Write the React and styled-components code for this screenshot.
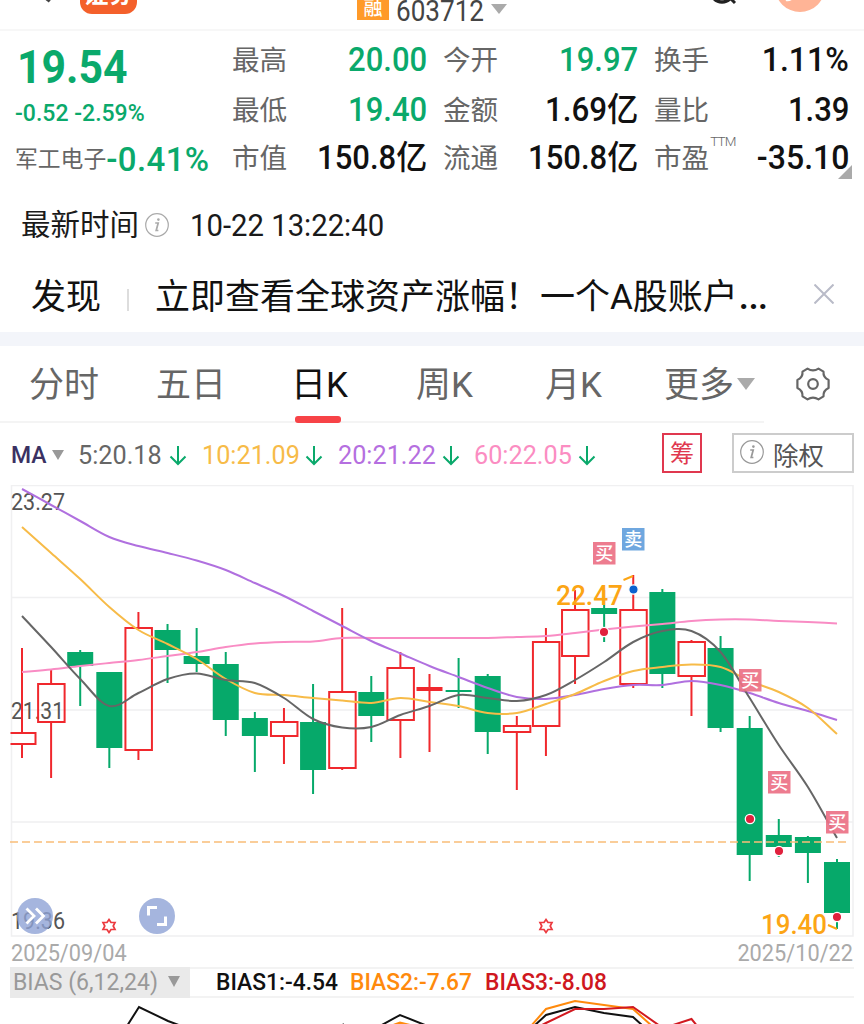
import React from "react";
import styled, { createGlobalStyle } from "styled-components";

const GlobalStyle = createGlobalStyle`
  * {
    box-sizing: border-box;
  }
  body {
    margin: 0;
    background: #fff;
    font-family: Roboto, "Noto Sans CJK SC", sans-serif;
  }
`;

const Page = styled.div`
  width: 864px;
  height: 1024px;
  overflow: hidden;
  background: #fff;
`;

// narrow figures, squeezed towards the side they are aligned to
const Num = styled.span`
  display: inline-block;
  transform: scaleX(${(p) => p.$s || 0.94});
  transform-origin: ${(p) => (p.$right ? "right" : "left")} center;
`;

const Header = styled.header`
  position: relative;
  height: 31px;
  overflow: hidden;
  border-bottom: 2px solid #f7f7f7;
  display: flex;
  justify-content: center;
`;

const HeaderArt = styled.svg`
  position: absolute;
  left: 0;
  top: 0;
`;

const Broker = styled.div`
  position: absolute;
  left: 80px;
  top: -26px;
  width: 57px;
  height: 40px;
  border-radius: 12px;
  background: #f4602b;
  color: #fff;
  font-size: 25px;
  font-weight: 700;
  line-height: 42px;
  text-align: center;
`;

const Code = styled.div`
  display: flex;
  align-items: flex-start;
  height: 29px;
  margin-top: -6px;
  font-size: 29px;
  line-height: 34px;
  color: #444;
  ${Num} {
    margin-right: -10px;
  }
`;

const Margin = styled.span`
  width: 32px;
  height: 26px;
  margin: 0 7px 0 0;
  background: #ff9a29;
  color: #fff;
  font-size: 19px;
  font-weight: 500;
  line-height: 29px;
  text-align: center;
`;

const Caret = styled.i`
  display: inline-block;
  flex: none;
  border-style: solid;
  border-color: ${(p) => p.color || "#aaa"} transparent transparent;
  border-width: ${(p) => p.h}px ${(p) => p.w / 2}px 0;
  margin: ${(p) => p.m || "0"};
`;

const Quote = styled.section`
  position: relative;
  display: grid;
  grid-template-columns: 217px 195px 16px 195px 16px 195px;
  grid-template-rows: 50px 50px 46px;
  height: 161px;
  padding: 4px 15px 0;
`;

const Summary = styled.div`
  grid-row: 1 / 4;
  height: 146px;
`;

const Price = styled.div`
  height: 58px;
  padding-left: 2px;
  font-size: 46px;
  font-weight: 700;
  line-height: 65px;
  color: #0aa96b;
`;

const Change = styled.div`
  height: 30px;
  font-size: 23.5px;
  font-weight: 500;
  line-height: 40px;
  color: #0aa96b;
`;

const Sector = styled.div`
  display: flex;
  align-items: center;
  height: 74px;
  font-size: 22.8px;
  line-height: 36px;
  color: #666;
  white-space: nowrap;
  b {
    font-size: 33px;
    font-weight: 500;
    letter-spacing: 0.4px;
    color: #0aa96b;
  }
`;

const Cell = styled.div`
  grid-column: ${(p) => p.$col};
  display: flex;
  align-items: center;
  justify-content: space-between;
  font-size: 27.6px;
  line-height: 36px;
  color: #666;
  white-space: nowrap;
  sup {
    font-size: 13.5px;
    font-weight: 300;
    line-height: 15px;
    align-self: flex-start;
    margin: -1px auto 0 1px;
    width: 20px;
    letter-spacing: -0.8px;
  }
`;

const Label = styled.span`
  padding-top: 2px;
`;

const Value = styled(Num)`
  font-size: 33px;
  font-weight: 500;
  color: ${(p) => (p.$green ? "#0aa96b" : "#111")};
`;

const Corner = styled.i`
  position: absolute;
  right: 12px;
  top: 134px;
  border-style: solid;
  border-width: 0 0 14px 14px;
  border-color: transparent transparent #aaa;
`;

const TimeRow = styled.div`
  display: flex;
  align-items: center;
  height: 66px;
  padding: 0 21px;
  font-size: 29.5px;
  line-height: 40px;
  color: #1a1a1a;
  svg {
    margin: -1px 21px 0 6px;
  }
  ${Num} {
    padding-top: 2px;
    font-size: 30.5px;
  }
`;

const Discover = styled.div`
  display: flex;
  align-items: center;
  height: 74px;
  padding: 6px 30px 0 31px;
  font-size: 35px;
  line-height: 68px;
  color: #111;
  white-space: nowrap;
  svg {
    margin-top: -9px;
  }
`;

const Divider = styled.i`
  width: 2px;
  height: 22px;
  margin: 4px 26px 0 26px;
  background: #ddd;
`;

const Promo = styled.span`
  flex: 1;
  b {
    font-size: 46px;
    font-weight: 400;
    line-height: 40px;
  }
`;

const Band = styled.div`
  height: 14px;
  background: #f3f5fa;
`;

const Tabs = styled.nav`
  display: flex;
  height: 77px;
  padding-left: 29px;
  font-size: 35px;
  color: #666;
  background: linear-gradient(#f4f4f4, #f4f4f4) 0 100% / 764px 2px no-repeat;
`;

const Tab = styled.div`
  display: flex;
  align-items: center;
  position: relative;
  width: ${(p) => p.$w}px;
  padding-bottom: ${(p) => (p.$icon ? 1 : 6)}px;
  color: ${(p) => (p.$active ? "#111" : "#666")};
  &::after {
    content: "";
    display: ${(p) => (p.$active ? "block" : "none")};
    position: absolute;
    left: 4px;
    bottom: 0;
    width: 46px;
    height: 7px;
    border-radius: 3px;
    background: #f74347;
  }
`;

const MaRow = styled.div`
  display: flex;
  align-items: center;
  height: 62px;
  padding: 2px 10px 0 11px;
  font-size: 26px;
  white-space: nowrap;
`;

const MaName = styled.span`
  width: 67px;
  font-size: 23px;
  font-weight: 500;
  color: #3a3162;
`;

const MaItem = styled.span`
  display: flex;
  align-items: center;
  justify-content: space-between;
  width: ${(p) => p.$w}px;
  margin-right: 14.6px;
  color: ${(p) => p.color};
`;

const Chips = styled.span`
  width: 40px;
  height: 40px;
  margin: -4px 30px 0 auto;
  border: 2px solid #e0384f;
  color: #e0384f;
  font-size: 24px;
  line-height: 38px;
  text-align: center;
`;

const ExRights = styled.span`
  display: flex;
  align-items: center;
  width: 122px;
  height: 40px;
  margin-top: -4px;
  padding-left: 6px;
  border: 2px solid #ccc;
  color: #555;
  font-size: 25.5px;
  svg {
    margin: -2px 9px 0 0;
  }
`;

const Chart = styled.svg`
  display: block;
`;

const Dates = styled.div`
  display: flex;
  justify-content: space-between;
  height: 29px;
  padding: 0 11px;
  font-size: 23.5px;
  line-height: 30px;
  color: #aaa;
`;

const BiasRow = styled.div`
  display: flex;
  align-items: center;
  height: 31px;
  margin: 0 10px;
  border-top: 2px solid #f3f3f3;
  border-bottom: 2px solid #f3f3f3;
  font-size: 23.5px;
  line-height: 26px;
  white-space: nowrap;
`;

const BiasName = styled.span`
  display: flex;
  align-items: center;
  justify-content: space-between;
  width: 180px;
  height: 31px;
  margin-right: 26px;
  padding: 0 10px 2px 3px;
  background: #eaeaea;
  color: #999;
`;

const BiasValue = styled.span`
  width: ${(p) => p.$w}px;
  padding-bottom: 2px;
  color: ${(p) => p.color};
  font-weight: 500;
`;

const Info = ({ size, color }) => (
  <svg width={size} height={size} viewBox="0 0 24 24">
    <circle cx="12" cy="12" r="11.3" fill="none" stroke={color} strokeWidth="1.2" />
    <path d="M10.2 10h3l-2 7.5h2.2" fill="none" stroke={color} strokeWidth="1.7" />
    <circle cx="13.4" cy="6.6" r="1.3" fill={color} />
  </svg>
);

const Down = () => (
  <svg width="18" height="21" viewBox="0 0 18 21">
    <path d="M9 1v18M1.5 11.5L9 19l7.5-7.5" fill="none" stroke="#0aa96b" strokeWidth="2" />
  </svg>
);

const Gear = () => (
  <svg width="34" height="34" viewBox="0 0 34 34" fill="none" stroke="#666" strokeWidth="2.2">
    <path
      d="M11.500 1.600Q17 5 22.500 1.600L27.500 4.600Q27 10.500 32.600 13V21Q27 23.500 27.500 29.400L22.500 32.400Q17 29 11.500 32.400L6.500 29.400Q7 23.500 1.400 21V13Q7 10.500 6.500 4.600Z"
      strokeLinejoin="round"
    />
    <circle cx="17" cy="17" r="4.800" />
  </svg>
);

// [up, high, low, bodyTop, bodyBottom]
const candles = [
  [1, 648, 758, 732, 745],
  [1, 670, 778, 683, 723],
  [0, 650, 706, 652, 666],
  [0, 672, 768, 672, 748],
  [1, 612, 760, 627, 751],
  [0, 624, 683, 630, 650],
  [0, 628, 672, 656, 664],
  [0, 652, 736, 664, 720],
  [0, 712, 772, 718, 736],
  [1, 708, 764, 721, 737],
  [0, 684, 794, 722, 770],
  [1, 608, 770, 691, 769],
  [0, 676, 742, 692, 716],
  [1, 652, 758, 667, 721],
  [1, 674, 752, 687, 691],
  [0, 658, 708, 690, 692],
  [0, 674, 754, 676, 732],
  [1, 716, 790, 725, 733],
  [1, 628, 756, 641, 727],
  [1, 590, 684, 609, 657],
  [0, 590, 642, 608, 614],
  [1, 575, 688, 609, 685],
  [0, 589, 688, 592, 674],
  [1, 640, 716, 641, 677],
  [0, 636, 732, 648, 728],
  [0, 716, 881, 728, 855],
  [0, 819, 857, 835, 847],
  [0, 836, 883, 837, 853],
  [0, 859, 929, 862, 913],
];

const ma5 = [616, 647, 679, 706, 693, 679, 673.5, 680, 683, 698, 719, 727.5, 727, 715, 706, 695, 698, 701, 695, 680, 662, 642, 631, 631, 652, 698, 745, 787, 838];
const ma10 = [527, 553, 579, 607, 630, 644, 659, 679, 693, 695, 698, 700.5, 703, 698, 702, 706, 713, 713, 704, 694, 681, 671, 667, 664.5, 667, 681, 692, 708, 734];
const ma20 = [489, 505, 521, 537, 546, 553, 560.5, 570, 583, 596, 611, 626, 641, 653.5, 666, 677, 688, 697, 699, 695, 689, 685, 685, 681, 685, 693, 703, 711, 720];
const ma60 = [672, 669.5, 666, 663, 660, 656, 652, 647, 643.5, 642, 641.5, 638, 638, 638, 638, 638, 638, 637, 636, 633, 629.5, 626.5, 624, 621, 619.5, 619.5, 621, 622, 623.5];

const xOf = (i) => 22 + i * 29.107;

function smooth(ys) {
  const last = ys.length - 1;
  // the line is continued past both ends so that it starts and stops straight
  const at = (i) => (i < 0 ? 2 * ys[0] - ys[1] : i > last ? 2 * ys[last] - ys[last - 1] : ys[i]);
  let d = `M${xOf(0)} ${ys[0]}`;
  for (let i = 0; i < last; i++) {
    const c1 = at(i) + (at(i + 1) - at(i - 1)) / 6;
    const c2 = at(i + 1) - (at(i + 2) - at(i)) / 6;
    d += `C${xOf(i) + 9.7} ${c1} ${xOf(i + 1) - 9.7} ${c2} ${xOf(i + 1)} ${ys[i + 1]}`;
  }
  return d;
}

const Candle = ({ i, data }) => {
  const [up, high, low, top, bottom] = data;
  const x = xOf(i);
  const color = up ? "#f0282d" : "#06a96a";
  const hollow = up && bottom - top > 5;
  return (
    <g>
      <path d={`M${x} ${high}V${top}M${x} ${bottom}V${low}`} stroke={color} strokeWidth="2" />
      {hollow ? (
        <rect x={x - 13} y={top + 1} width="26.500" height={bottom - top - 2} fill="none" stroke={color} strokeWidth="2" />
      ) : (
        <rect x={x - 13} y={top} width="26" height={bottom - top} fill={color} />
      )}
    </g>
  );
};

const Mark = ({ x, y, sell }) => (
  <g>
    <rect x={x} y={y} width="22.500" height="22.500" fill={sell ? "#639fdc" : "#ec7186"} opacity="0.92" />
    <text x={x + 11.2} y={y + 17.5} fontSize="18" fontWeight="500" textAnchor="middle" fill="#fff">
      {sell ? "卖" : "买"}
    </text>
  </g>
);

const Star = ({ x }) => (
  <path
    transform={`translate(${x} 926)`}
    d="M0 -6.500L2 -3.500H6L4.200 0L6 3.500H2L0 6.500L-2 3.500H-6L-4.200 0L-6 -3.500H-2Z"
    fill="none"
    stroke="#ec3a3f"
    strokeWidth="1.700"
  />
);

const KLine = () => (
  <Chart width="864" height="453" viewBox="0 485 864 453">
    <defs>
      <clipPath id="plot">
        <rect x="10.500" y="485" width="843" height="453" />
      </clipPath>
    </defs>
    <path d="M11.500 485.500H853V936H11.500ZM11 597.500H853M11 710H853M11 822H853" fill="none" stroke="#f0f0f1" strokeWidth="1.500" />
    <g fontSize="23.500" fill="#555">
      <text x="11" y="510" textLength="54" lengthAdjust="spacingAndGlyphs">23.27</text>
      <text x="11" y="719" textLength="53" lengthAdjust="spacingAndGlyphs">21.31</text>
      <text x="11" y="929" textLength="54" lengthAdjust="spacingAndGlyphs">19.36</text>
    </g>
    <g clipPath="url(#plot)">
      {candles.map((c, i) => (
        <Candle key={i} i={i} data={c} />
      ))}
    </g>
    <path d="M10 842H850" stroke="#f9bd78" strokeWidth="1.500" strokeDasharray="8 4" />
    <g fill="none" strokeWidth="2">
      <path d={smooth(ma60)} stroke="#f98cc4" />
      <path d={smooth(ma20)} stroke="#b070df" />
      <path d={smooth(ma10)} stroke="#f7bb48" />
      <path d={smooth(ma5)} stroke="#666" />
    </g>
    <g fontSize="28" fontWeight="500" fill="#fca515">
      <text x="556" y="605" textLength="67" lengthAdjust="spacingAndGlyphs">22.47</text>
      <text x="761" y="934" textLength="66" lengthAdjust="spacingAndGlyphs">19.40</text>
    </g>
    <path d="M623.500 580L633 576M828 925L837 929" fill="none" stroke="#fca515" strokeWidth="2" />
    <Mark x={593} y={542} />
    <Mark x={622} y={528} sell />
    <Mark x={739} y={669} />
    <Mark x={768} y={771} />
    <Mark x={826} y={811} />
    <g fill="#e0213d" stroke="#fff" strokeWidth="1.300">
      <circle cx="604" cy="632" r="4.700" />
      <circle cx="750" cy="819" r="4.700" />
      <circle cx="779" cy="851" r="4.700" />
      <circle cx="837" cy="917" r="4.700" />
      <circle cx="633.500" cy="589.500" r="4.700" fill="#0a62cf" />
    </g>
    <Star x={109} />
    <Star x={546} />
    <g fill="#8fa3d6" opacity="0.8">
      <circle cx="35" cy="916" r="18" />
      <circle cx="157" cy="916" r="18" />
    </g>
    <path d="M26.500 908.500L34 916L26.500 923.500M36 908.500L43.500 916L36 923.500" fill="none" stroke="#fff" strokeWidth="2.800" />
    <path d="M148.500 915.500V907.500H157M165.500 916.500V924.500H157" fill="none" stroke="#fff" strokeWidth="3" />
  </Chart>
);

const BiasChart = () => (
  <Chart width="864" height="27" viewBox="0 997 864 27" fill="none" strokeWidth="2">
    <path d="M127 1025L139 1006L168 1020L184 1026M341 1025L344 1023M380 1025L400 1014L430 1026" stroke="#111" />
    <path d="M392 1025L400 1022L412 1025" stroke="#ff8a0c" strokeWidth="3" />
    <path d="M531 1025L546 1008L575 1000L604 1004L633 1008L652 1025" stroke="#ff8a0c" />
    <path d="M534 1025L546 1014L575 1006L604 1012L633 1016L643 1025" stroke="#111" />
    <path d="M540 1025L546 1022L575 1008H604L633 1006L660 1025M670 1025L691.500 1018L698 1026" stroke="#d11920" />
  </Chart>
);

const stats = [
  [2, "最高", "20.00", true],
  [4, "今开", "19.97", true],
  [6, "换手", "1.11%", false, 0.97],
  [2, "最低", "19.40", true],
  [4, "金额", "1.69亿", false, 0.95],
  [6, "量比", "1.39", false],
  [2, "市值", "150.8亿", false],
  [4, "流通", "150.8亿", false],
  [6, "市盈", "-35.10", false, 0.97],
];

const mas = [
  ["5:20.18", "#666", 109],
  ["10:21.09", "#f7bb48", 121.5],
  ["20:21.22", "#b56fe0", 122],
  ["60:22.05", "#fb8dc2", 122],
];

export default function App() {
  return (
    <Page>
      <GlobalStyle />
      <Header>
        <Broker>证券</Broker>
        <Code>
          <Margin>融</Margin>
          <Num $s={0.9}>603712</Num>
          <Caret w={16} h={10} m="10px 0 0 7px" />
        </Code>
        <HeaderArt width="864" height="29" fill="none">
          <path d="M45 -3L50 1" stroke="#444" strokeWidth="4" />
          <circle cx="722" cy="-9" r="11" stroke="#222" strokeWidth="3.500" />
          <path d="M729 -3L735 3" stroke="#222" strokeWidth="3" />
          <circle cx="800" cy="-13" r="25" fill="#ffb496" />
          <path d="M786 0Q789 1 793 -2" stroke="#fff" strokeWidth="2" />
        </HeaderArt>
      </Header>

      <Quote>
        <Summary>
          <Price>
            <Num $s={0.93}>19.54</Num>
          </Price>
          <Change>
            <Num $s={0.98}>-0.52 -2.59%</Num>
          </Change>
          <Sector>
            军工电子<b>-0.41%</b>
          </Sector>
        </Summary>
        {stats.map(([col, name, value, green, s]) => (
          <Cell key={name} $col={col}>
            <Label>{name}</Label>
            {name === "市盈" && <sup>TTM</sup>}
            <Value $right $green={green} $s={s}>
              {value}
            </Value>
          </Cell>
        ))}
        <Corner />
      </Quote>

      <TimeRow>
        最新时间
        <Info size={24} color="#aaa" />
        <Num $s={0.96}>10-22 13:22:40</Num>
      </TimeRow>
      <Discover>
        发现
        <Divider />
        <Promo>
          立即查看全球资产涨幅！一个A股账户<b>…</b>
        </Promo>
        <svg width="20" height="20" viewBox="0 0 20 20">
          <path d="M0.500 0.500L19.500 19.500M19.500 0.500L0.500 19.500" stroke="#b9bbc8" strokeWidth="2" />
        </svg>
      </Discover>
      <Band />
      <Tabs>
        <Tab $w={127}>分时</Tab>
        <Tab $w={135}>五日</Tab>
        <Tab $w={125} $active>
          日K
        </Tab>
        <Tab $w={129}>周K</Tab>
        <Tab $w={119}>月K</Tab>
        <Tab $w={132}>
          更多
          <Caret w={18} h={12} m="5px 0 0 3px" />
        </Tab>
        <Tab $w={40} $icon>
          <Gear />
        </Tab>
      </Tabs>
      <MaRow>
        <MaName>
          MA
          <Caret w={12} h={10} color="#999" m="0 0 3px 5px" />
        </MaName>
        {mas.map(([text, color, w]) => (
          <MaItem key={text} color={color} $w={w}>
            <Num $s={0.97}>{text}</Num>
            <Down />
          </MaItem>
        ))}
        <Chips>筹</Chips>
        <ExRights>
          <Info size={24} color="#999" />
          除权
        </ExRights>
      </MaRow>
      <KLine />
      <Dates>
        <Num $s={0.925}>2025/09/04</Num>
        <Num $s={0.925} $right>
          2025/10/22
        </Num>
      </Dates>
      <BiasRow>
        <BiasName>
          <Num $s={0.98}>BIAS (6,12,24)</Num>
          <Caret w={13} h={11} color="#999" />
        </BiasName>
        <BiasValue $w={134} color="#111">
          <Num $s={0.97}>BIAS1:-4.54</Num>
        </BiasValue>
        <BiasValue $w={135} color="#ff8a0c">
          <Num $s={0.97}>BIAS2:-7.67</Num>
        </BiasValue>
        <BiasValue $w={130} color="#cf1720">
          <Num $s={0.97}>BIAS3:-8.08</Num>
        </BiasValue>
      </BiasRow>
      <BiasChart />
    </Page>
  );
}
